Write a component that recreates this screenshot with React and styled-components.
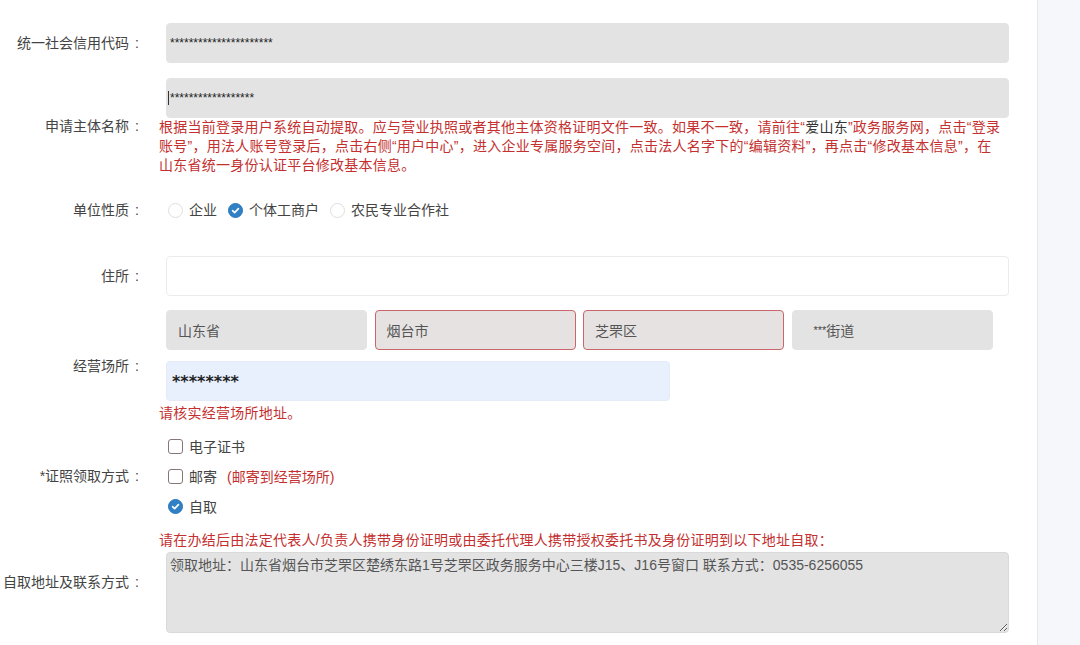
import React from "react";
import styled, { createGlobalStyle, css } from "styled-components";

const GlobalStyle = createGlobalStyle`
  html, body { margin: 0; padding: 0; background: #fff; }
  body {
    font-family: "Liberation Sans", "Noto Sans CJK SC", sans-serif;
    font-size: 14px;
    color: #444;
  }
  * { box-sizing: border-box; }
`;

const RED = "#c3302f";

const Page = styled.div`
  display: flex;
  width: 1080px;
  height: 645px;
  overflow: hidden;
  background: #fff;
`;

const Main = styled.main`
  flex: 1;
  display: flex;
  flex-direction: column;
  padding: 23px 28px 0 0;
`;

const Side = styled.aside`
  width: 43px;
  background: #f5f7fa;
  border-left: 1px solid #e5e8ed;
`;

const Row = styled.div`
  display: grid;
  grid-template-columns: 159px 1fr;
  align-items: center;
  margin-top: ${(p) => p.$mt || 0}px;
  min-height: ${(p) => (p.$h ? `${p.$h}px` : "auto")};
`;

const Label = styled.div`
  text-align: right;
  padding-right: 20px;
  line-height: 19px;
  color: #444;
  white-space: nowrap;
`;

const Colon = styled.span`
  margin-left: 6px;
`;

const Content = styled.div`
  display: flex;
  flex-direction: column;
  min-width: 0;
`;

const variants = {
  disabled: css`
    background: #e3e3e3;
    border-color: #e3e3e3;
  `,
  plain: css`
    background: #fff;
    border-color: #ebebeb;
  `,
  error: css`
    background: #e6e2e2;
    border-color: #c9666c;
  `,
  autofill: css`
    background: #e8f0fe;
    border-color: #e4ebf7;
  `,
};

const Field = styled.div`
  height: 40px;
  margin-left: ${(p) => (p.$flush ? 0 : 7)}px;
  margin-top: ${(p) => p.$mt || 0}px;
  width: ${(p) => (p.$w ? `${p.$w}px` : "auto")};
  border: 1px solid transparent;
  border-radius: 4px;
  display: flex;
  align-items: center;
  padding-left: ${(p) => p.$pl ?? 11}px;
  font-size: 14px;
  color: #555;
  ${(p) => variants[p.$variant || "disabled"]}
`;

const Masked = styled.span`
  font-family: ${(p) => (p.$big ? '"DejaVu Sans", sans-serif' : '"Liberation Sans", sans-serif')};
  font-size: ${(p) => (p.$big ? 16 : 12)}px;
  color: #222;
  font-weight: ${(p) => (p.$big ? 700 : 400)};
`;

const SmallStars = styled.span`
  font-size: 11px;
  color: #444;
`;

const Caret = styled.span`
  display: inline-block;
  width: 1px;
  height: 14px;
  background: #333;
  margin-right: 1px;
  vertical-align: middle;
`;

const SelectGrid = styled.div`
  display: grid;
  grid-template-columns: repeat(4, 201px);
  column-gap: 7.5px;
  margin-left: 7px;
`;

const Hint = styled.div`
  color: ${RED};
  line-height: 19px;
  font-size: 14px;
  letter-spacing: 0.25px;
  white-space: nowrap;
  margin-top: ${(p) => p.$mt || 0}px;
`;

const Dark = styled.span`
  color: #333;
`;

const Options = styled.div`
  display: flex;
  align-items: center;
  padding-left: 9px;
  height: 40px;
`;

const Option = styled.label`
  display: inline-flex;
  align-items: center;
  gap: 6px;
  margin-right: 11px;
  color: #444;
  line-height: 19px;
`;

const CheckList = styled.div`
  display: flex;
  flex-direction: column;
  padding-left: 9px;
`;

const CheckItem = styled.label`
  display: flex;
  align-items: center;
  gap: 6px;
  height: 30px;
  color: #444;
`;

const Red = styled.span`
  color: ${RED};
  margin-left: 4px;
`;

const Round = styled.span`
  width: 15px;
  height: 15px;
  border-radius: 50%;
  border: 1px solid ${(p) => (p.$checked ? "#2a79bd" : "#dedede")};
  background: ${(p) => (p.$checked ? "#2f80c4" : "#fff")};
  display: inline-flex;
  align-items: center;
  justify-content: center;
  flex: none;
`;

const Square = styled.span`
  width: 15px;
  height: 15px;
  border-radius: 3px;
  border: 1.2px solid #857777;
  background: #fff;
  flex: none;
`;

const TextArea = styled.textarea`
  display: block;
  margin: 2px 0 0 7px;
  height: 81px;
  width: calc(100% - 7px);
  background: #e3e3e3;
  border: 1px solid #d9d9d9;
  border-radius: 4px;
  padding: 2px 3px;
  font-family: "Liberation Sans", "Noto Sans CJK SC", sans-serif;
  font-size: 14px;
  line-height: 20px;
  color: #555;
  resize: vertical;
  outline: none;
`;

const Tick = () => (
  <svg width="9" height="9" viewBox="0 0 8 8">
    <path d="M1.4 4.2 L3.2 5.9 L6.6 2.3" fill="none" stroke="#fff" strokeWidth="1.5" strokeLinecap="round" strokeLinejoin="round" />
  </svg>
);

const Radio = ({ checked, children }) => (
  <Option>
    <Round $checked={checked}>{checked && <Tick />}</Round>
    {children}
  </Option>
);

const FormLabel = ({ children }) => (
  <Label>
    {children}
    <Colon>:</Colon>
  </Label>
);

export default function App() {
  return (
    <>
      <GlobalStyle />
      <Page>
        <Main>
          <Row $h={40}>
            <FormLabel>统一社会信用代码</FormLabel>
            <Content>
              <Field $variant="disabled" $pl={3}>
                <Masked>**********************</Masked>
              </Field>
            </Content>
          </Row>

          <Row $mt={15}>
            <FormLabel>申请主体名称</FormLabel>
            <Content>
              <Field $variant="disabled" $pl={1}>
                <Caret />
                <Masked>******************</Masked>
              </Field>
              <Hint>
                根据当前登录用户系统自动提取。应与营业执照或者其他主体资格证明文件一致。如果不一致，请前往“<Dark>爱山东</Dark>”政务服务网，点击“登录
                <br />
                账号”，用法人账号登录后，点击右侧“用户中心”，进入企业专属服务空间，点击法人名字下的“编辑资料”，再点击“修改基本信息”，在
                <br />
                山东省统一身份认证平台修改基本信息。
              </Hint>
            </Content>
          </Row>

          <Row $mt={15} $h={40}>
            <FormLabel>单位性质</FormLabel>
            <Options>
              <Radio>企业</Radio>
              <Radio checked>个体工商户</Radio>
              <Radio>农民专业合作社</Radio>
            </Options>
          </Row>

          <Row $mt={26} $h={40}>
            <FormLabel>住所</FormLabel>
            <Content>
              <Field $variant="plain" />
            </Content>
          </Row>

          <Row $mt={14}>
            <FormLabel>经营场所</FormLabel>
            <Content>
              <SelectGrid>
                <Field $flush $variant="disabled">山东省</Field>
                <Field $flush $variant="error">烟台市</Field>
                <Field $flush $variant="error">芝罘区</Field>
                <Field $flush $variant="disabled" $pl={21}>
                  <SmallStars>***</SmallStars>街道
                </Field>
              </SelectGrid>
              <Field $variant="autofill" $mt={11} $w={504} $pl={5}>
                <Masked $big>********</Masked>
              </Field>
              <Hint $mt={3}>请核实经营场所地址。</Hint>
            </Content>
          </Row>

          <Row $mt={8}>
            <FormLabel>*证照领取方式</FormLabel>
            <CheckList>
              <CheckItem>
                <Square />
                电子证书
              </CheckItem>
              <CheckItem>
                <Square />
                邮寄<Red>(邮寄到经营场所)</Red>
              </CheckItem>
              <CheckItem>
                <Round $checked>
                  <Tick />
                </Round>
                自取
              </CheckItem>
            </CheckList>
          </Row>

          <Row $mt={10}>
            <FormLabel>自取地址及联系方式</FormLabel>
            <Content>
              <Hint>请在办结后由法定代表人/负责人携带身份证明或由委托代理人携带授权委托书及身份证明到以下地址自取：</Hint>
              <TextArea
                readOnly
                value="领取地址：山东省烟台市芝罘区楚绣东路1号芝罘区政务服务中心三楼J15、J16号窗口 联系方式：0535-6256055"
              />
            </Content>
          </Row>
        </Main>
        <Side />
      </Page>
    </>
  );
}
